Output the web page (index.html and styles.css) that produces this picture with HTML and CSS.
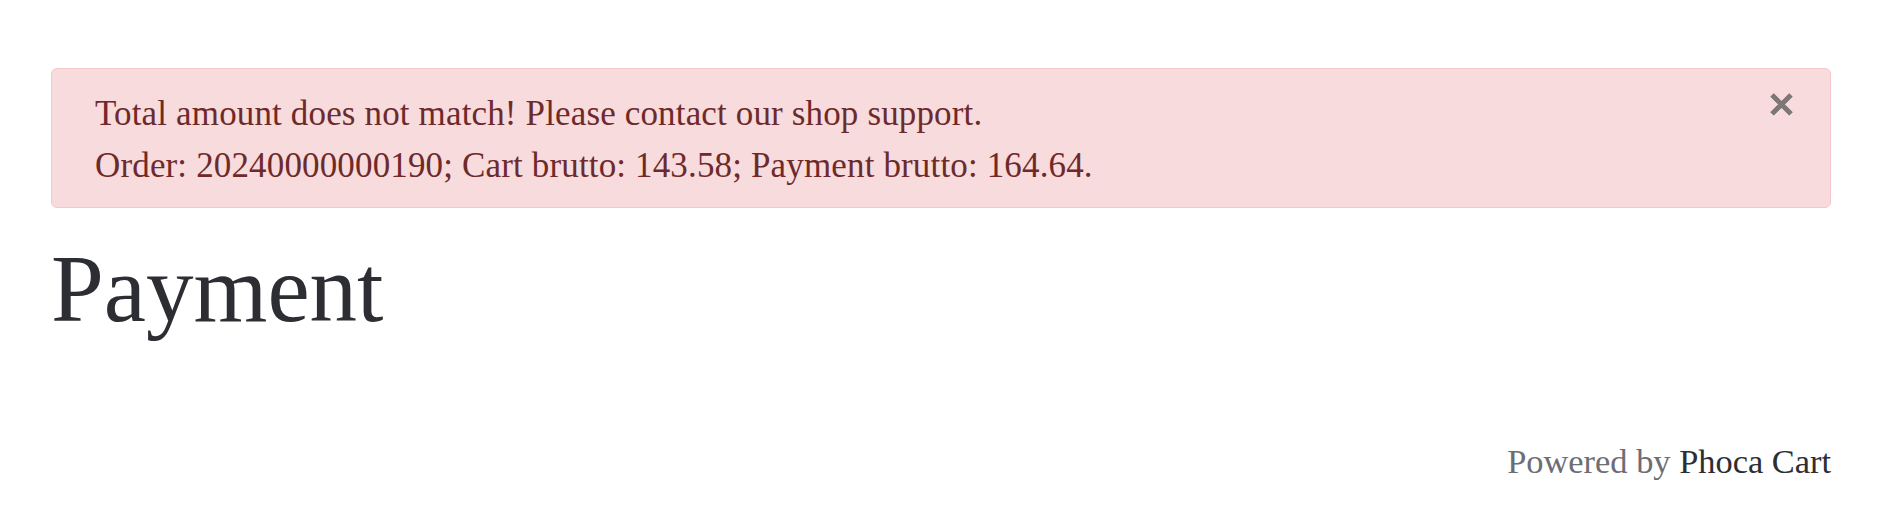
FILE: index.html
```html
<!DOCTYPE html>
<html lang="en">
<head>
<meta charset="utf-8">
<title>Payment</title>
<link rel="stylesheet" href="styles.css">
</head>
<body>
<div class="page">
  <div class="alert" role="alert">
    <div class="alert-body">
      <div>Total amount does not match! Please contact our shop support.</div>
      <div>Order: 20240000000190; Cart brutto: 143.58; Payment brutto: 164.64.</div>
    </div>
    <button class="close" type="button" aria-label="Close">
      <svg width="25" height="25" viewBox="0 0 25 25"><path d="M3 3 L22 22 M22 3 L3 22" stroke="currentColor" stroke-width="5" stroke-linecap="butt"/></svg>
    </button>
  </div>
  <h1 class="title">Payment</h1>
  <div class="footer">
    <span class="powered">Powered by</span> <span class="brand">Phoca Cart</span>
  </div>
</div>
</body>
</html>
```
FILE: styles.css
```css
html, body {
  margin: 0;
  padding: 0;
  background: #ffffff;
}
body {
  font-family: "Liberation Serif", "Times New Roman", serif;
  color: #2d2e33;
}
.page {
  padding: 68px 57px 0 51px;
}
.alert {
  display: flex;
  justify-content: space-between;
  align-items: flex-start;
  background: #f8dbdc;
  border: 1px solid #f5c6cb;
  border-radius: 6px;
  color: #6e2a2b;
  font-size: 35px;
  letter-spacing: 0.15px;
  line-height: 52px;
  padding: 19px 36px 15px 43px;
}
.close {
  background: none;
  border: 0;
  padding: 0;
  margin-top: 4px;
  color: rgba(0, 0, 0, 0.5);
  display: flex;
  filter: drop-shadow(0 1px 0 #fff);
}
.title {
  margin: 0;
  font-weight: 400;
  font-size: 95px;
  line-height: 110px;
  margin-top: 26px;
  color: #2d2e33;
}
.footer {
  text-align: right;
  font-size: 34.4px;
  line-height: 48px;
  margin-top: 93px;
}
.powered {
  color: #6c6d75;
}
.brand {
  color: #2d2e33;
}
```
